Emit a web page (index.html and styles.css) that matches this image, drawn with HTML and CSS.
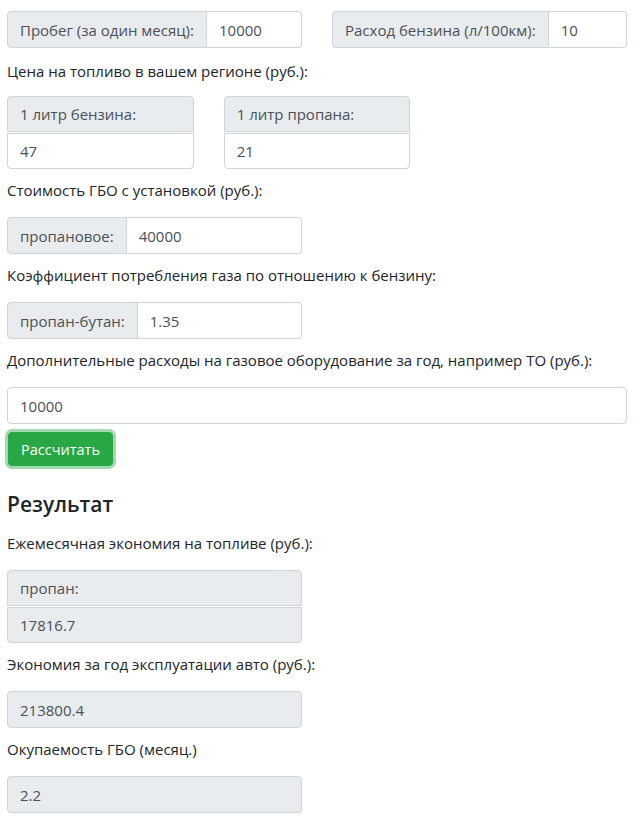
FILE: index.html
```html
<!DOCTYPE html>
<html lang="ru">
<head>
<meta charset="utf-8">
<title>Калькулятор ГБО</title>
<link rel="stylesheet" href="styles.css">
</head>
<body>
<div class="page">
  <div class="row row-2">
    <div class="group">
      <span class="addon">Пробег (за один месяц):</span>
      <input class="field" type="text" value="10000">
    </div>
    <div class="group">
      <span class="addon">Расход бензина (л/100км):</span>
      <input class="field" type="text" value="10">
    </div>
  </div>

  <p class="label label-first">Цена на топливо в вашем регионе (руб.):</p>
  <div class="row row-3">
    <div class="stack">
      <span class="addon addon-top">1 литр бензина:</span>
      <input class="field field-bottom" type="text" value="47">
    </div>
    <div class="stack">
      <span class="addon addon-top">1 литр пропана:</span>
      <input class="field field-bottom" type="text" value="21">
    </div>
  </div>

  <p class="label">Стоимость ГБО с установкой (руб.):</p>
  <div class="row row-2">
    <div class="group">
      <span class="addon">пропановое:</span>
      <input class="field" type="text" value="40000">
    </div>
  </div>

  <p class="label">Коэффициент потребления газа по отношению к бензину:</p>
  <div class="row row-2">
    <div class="group">
      <span class="addon">пропан-бутан:</span>
      <input class="field" type="text" value="1.35">
    </div>
  </div>

  <p class="label">Дополнительные расходы на газовое оборудование за год, например ТО (руб.):</p>
  <input class="field field-full" type="text" value="10000">

  <button class="btn" type="button">Рассчитать</button>

  <h3 class="title">Результат</h3>

  <p class="label label-result">Ежемесячная экономия на топливе (руб.):</p>
  <div class="row row-2">
    <div class="stack">
      <span class="addon addon-top">пропан:</span>
      <input class="field field-bottom readonly" type="text" value="17816.7" readonly>
    </div>
  </div>

  <p class="label">Экономия за год эксплуатации авто (руб.):</p>
  <div class="row row-2">
    <input class="field readonly" type="text" value="213800.4" readonly>
  </div>

  <p class="label">Окупаемость ГБО (месяц.)</p>
  <div class="row row-2">
    <input class="field readonly" type="text" value="2.2" readonly>
  </div>
</div>
</body>
</html>
```

FILE: styles.css
```css
* { box-sizing: border-box; }

html, body {
  margin: 0;
  padding: 0;
  background: #fff;
}

body {
  font-family: "Open Sans", "Noto Sans", sans-serif;
  font-size: 15px;
  color: #212529;
}

.page {
  width: 620px;
  margin-left: 7px;
  padding-top: 11px;
}

.row {
  display: grid;
  column-gap: 30px;
}

.row-2 { grid-template-columns: repeat(2, minmax(0, 1fr)); }
.row-3 { grid-template-columns: repeat(3, minmax(0, 1fr)); }

.group {
  display: flex;
  height: 37px;
  min-width: 0;
}

.stack {
  display: flex;
  flex-direction: column;
  min-width: 0;
}

.addon {
  display: flex;
  align-items: center;
  padding: 0 12px;
  background: #e9ecef;
  border: 1px solid #ced4da;
  border-radius: 4px 0 0 4px;
  color: #495057;
  white-space: nowrap;
  font-size: 15px;
}

.field {
  font-family: inherit;
  font-size: 15px;
  color: #495057;
  width: 100%;
  height: 37px;
  padding: 0 12px;
  border: 1px solid #ced4da;
  background: #fff;
  border-radius: 4px;
  min-width: 0;
  outline: none;
}

.group .field {
  flex: 1;
  width: auto;
  border-left: 0;
  border-radius: 0 4px 4px 0;
}

.addon-top {
  height: 36px;
  border-radius: 4px 4px 0 0;
}

.field-bottom {
  margin-top: 1px;
  height: 36px;
  border-radius: 0 0 4px 4px;
}

.field-full {
  display: block;
  width: 100%;
}

.readonly {
  background: #e9ecef;
}

.label {
  margin: 10px 0 16px;
  line-height: 22px;
}

.label-first {
  margin-top: 12px;
  margin-bottom: 14px;
}

.btn {
  display: block;
  margin: 8px 0 0 1px;
  height: 34px;
  padding: 0 12px;
  font-family: inherit;
  font-size: 14.5px;
  color: #fff;
  background: #28a745;
  border: 1px solid #28a745;
  border-radius: 4px;
  box-shadow: 0 0 0 3px rgba(72, 180, 97, 0.5);
}

.title {
  margin: 23px 0 0;
  font-size: 21px;
  font-weight: 600;
  line-height: 30px;
}

.label-result { margin-top: 13px; }
```
